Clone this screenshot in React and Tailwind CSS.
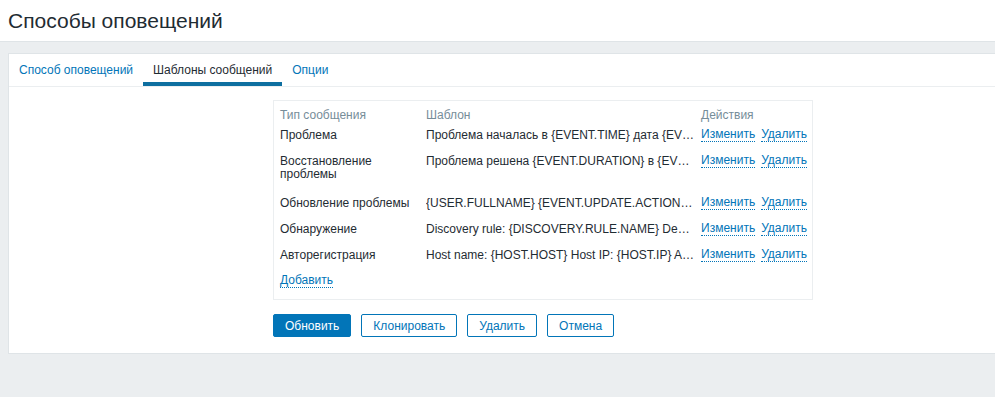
import React from 'react';

const rows = [
  { type: 'Проблема', tpl: 'Проблема началась в {EVENT.TIME} дата {EVENT.DATE}' },
  { type: 'Восстановление проблемы', tpl: 'Проблема решена {EVENT.DURATION} в {EVENT.RECOVERY.TIME}', tall: true },
  { type: 'Обновление проблемы', tpl: '{USER.FULLNAME} {EVENT.UPDATE.ACTION} problem at {EVENT.UPDATE.DATE}' },
  { type: 'Обнаружение', tpl: 'Discovery rule: {DISCOVERY.RULE.NAME} Device IP: {DISCOVERY.DEVICE.IPADDRESS}' },
  { type: 'Авторегистрация', tpl: 'Host name: {HOST.HOST} Host IP: {HOST.IP} Agent port: {HOST.PORT}' }
];

const DotLink = ({ children }) => (
  <a className="text-[#0275b8] border-b border-dotted border-[#0275b8] leading-[13px] cursor-pointer">{children}</a>
);

const App = () => {
  return (
    <div className="min-h-[397px] bg-[#ebeef0] text-[12px] text-[#1f2c33]" style={{ fontFamily: '"Liberation Sans", Arial, sans-serif' }}>
      <header className="h-[42px] bg-white border-b border-[#dfe4e7] px-[8px] flex items-center">
        <h1 className="text-[21px] font-normal leading-none -mt-[1px]">Способы оповещений</h1>
      </header>

      <div className="pl-[8px] pt-[11px]">
        <section className="bg-white border border-[#dfe4e7] border-r-0 h-[301px]">
          <nav className="flex h-[33px] border-b border-[#ebeef0]">
            <a className="px-[10px] flex items-center text-[#0275b8]">Способ оповещений</a>
            <a className="px-[10px] flex items-center border-b-[4px] border-[#0e6fa0] pt-[4px]">Шаблоны сообщений</a>
            <a className="px-[10px] flex items-center text-[#0275b8]">Опции</a>
          </nav>

          <div className="pl-[264px] pt-[13px]">
            <div className="w-[540px] border border-[#ebeef0] px-[6px] pt-[7px] pb-[5px]">
              <div className="grid grid-cols-[146px_275px_1fr] h-[14px] leading-[14px] text-[#768d99]">
                <div>Тип сообщения</div>
                <div>Шаблон</div>
                <div>Действия</div>
              </div>
              {rows.map((r) => (
                <div key={r.type} className={`grid grid-cols-[146px_275px_1fr] items-start leading-[14px] pt-[6px] ${r.tall ? 'h-[42px]' : 'h-[26px]'}`}>
                  <div className="pr-[10px] leading-[13px] pt-[1px]">{r.type}</div>
                  <div className="pr-[6px] truncate">{r.tpl}</div>
                  <div className="flex items-start gap-[6px]">
                    <DotLink>Изменить</DotLink>
                    <DotLink>Удалить</DotLink>
                  </div>
                </div>
              ))}
              <div className="h-[26px] pt-[6px] flex items-start">
                <DotLink>Добавить</DotLink>
              </div>
            </div>

            <div className="flex gap-[10px] mt-[14px]">
              <button className="h-[23px] px-[11px] rounded-[2px] bg-[#0275b8] text-white border border-[#0275b8]">Обновить</button>
              <button className="h-[23px] px-[11px] rounded-[2px] bg-white text-[#0275b8] border border-[#0275b8]">Клонировать</button>
              <button className="h-[23px] px-[11px] rounded-[2px] bg-white text-[#0275b8] border border-[#0275b8]">Удалить</button>
              <button className="h-[23px] px-[11px] rounded-[2px] bg-white text-[#0275b8] border border-[#0275b8]">Отмена</button>
            </div>
          </div>
        </section>
      </div>
    </div>
  );
};

export default App;
